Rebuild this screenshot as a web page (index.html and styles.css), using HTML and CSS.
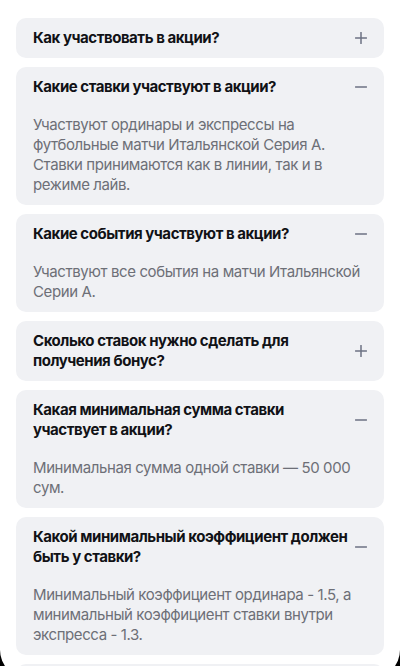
FILE: index.html
```html
<!DOCTYPE html>
<html lang="ru">
<head>
<meta charset="utf-8">
<title>FAQ</title>
<link rel="stylesheet" href="styles.css">
</head>
<body>
<div class="faq">
  <div class="item">
    <div class="head">
      <span class="q">Как участвовать в акции?</span>
      <svg class="icon" viewBox="0 0 12 12"><path d="M6 0.5v11M0.5 6h11"/></svg>
    </div>
  </div>
  <div class="item">
    <div class="head">
      <span class="q">Какие ставки участвуют в акции?</span>
      <svg class="icon" viewBox="0 0 12 12"><path d="M0.5 6h11"/></svg>
    </div>
    <div class="answer">Участвуют ординары и экспрессы на футбольные матчи Итальянской Серия А. Ставки принимаются как в линии, так и в режиме лайв.</div>
  </div>
  <div class="item">
    <div class="head">
      <span class="q">Какие события участвуют в акции?</span>
      <svg class="icon" viewBox="0 0 12 12"><path d="M0.5 6h11"/></svg>
    </div>
    <div class="answer">Участвуют все события на матчи Итальянской Серии А.</div>
  </div>
  <div class="item">
    <div class="head">
      <span class="q">Сколько ставок нужно сделать для получения бонус?</span>
      <svg class="icon" viewBox="0 0 12 12"><path d="M6 0.5v11M0.5 6h11"/></svg>
    </div>
  </div>
  <div class="item">
    <div class="head">
      <span class="q">Какая минимальная сумма ставки участвует в акции?</span>
      <svg class="icon" viewBox="0 0 12 12"><path d="M0.5 6h11"/></svg>
    </div>
    <div class="answer">Минимальная сумма одной ставки — 50&nbsp;000 сум.</div>
  </div>
  <div class="item">
    <div class="head">
      <span class="q">Какой минимальный коэффициент должен быть у ставки?</span>
      <svg class="icon" viewBox="0 0 12 12"><path d="M0.5 6h11"/></svg>
    </div>
    <div class="answer">Минимальный коэффициент ординара - 1.5, а минимальный коэффициент ставки внутри экспресса - 1.3.</div>
  </div>
  <div class="item">
    <div class="head">
      <span class="q">Когда будет начислен бонус?</span>
      <svg class="icon" viewBox="0 0 12 12"><path d="M6 0.5v11M0.5 6h11"/></svg>
    </div>
  </div>
</div>
<div class="frame"></div>
</body>
</html>
```
FILE: styles.css
```css
* { box-sizing: border-box; }
html, body { margin: 0; padding: 0; background: #fff; }
body {
  font-family: Inter, "Noto Sans", sans-serif;
  -webkit-font-smoothing: antialiased;
}
.faq {
  display: flex;
  flex-direction: column;
  gap: 9px;
  padding: 18px 16px 40px;
}
.item {
  background: #f0f1f4;
  border-radius: 10px;
  padding: 10px 17px 10px 17px;
}
.head {
  display: flex;
  align-items: center;
  gap: 6px;
}
.q {
  flex: 1;
  font-size: 15px;
  line-height: 20px;
  font-weight: 700;
  color: #111216;
  letter-spacing: -0.45px;
}
.icon {
  width: 12px;
  height: 12px;
  flex: none;
  fill: none;
  stroke: #6c7283;
  stroke-width: 1.5;
  stroke-linecap: round;
}
.answer {
  margin-top: 18px;
  font-size: 15px;
  line-height: 20px;
  color: #6d6f77;
  letter-spacing: -0.4px;
}
.frame {
  position: fixed;
  left: 0;
  right: 0;
  top: -100px;
  bottom: -12px;
  border-radius: 0 0 28px 28px;
  box-shadow: 0 0 0 60px #000;
  pointer-events: none;
}
```
